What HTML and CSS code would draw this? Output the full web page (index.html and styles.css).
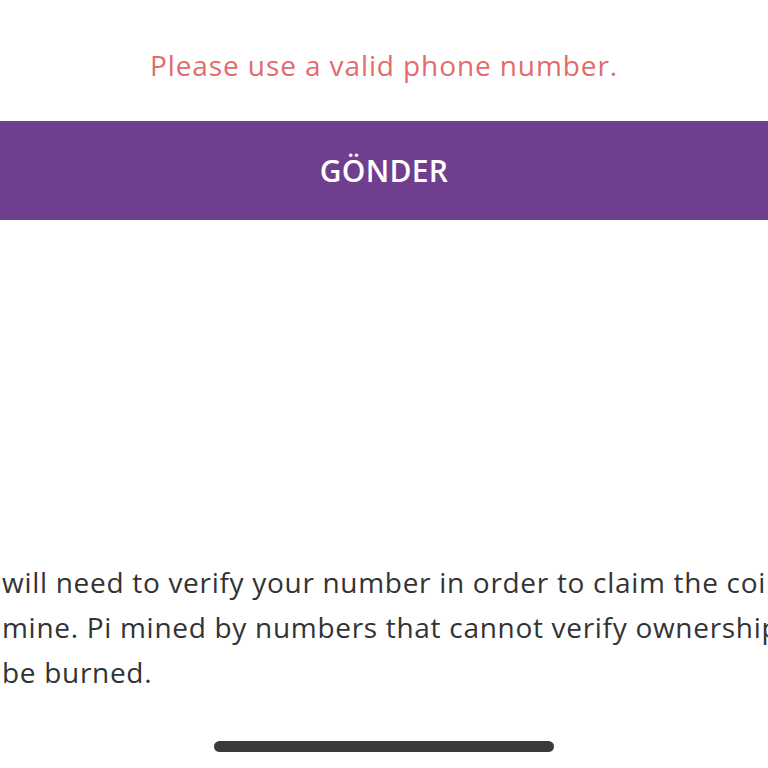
FILE: index.html
```html
<!DOCTYPE html>
<html>
<head>
<meta charset="utf-8">
<link rel="stylesheet" href="styles.css">
</head>
<body>
<div class="screen">
  <p class="error">Please use a valid phone number.</p>
  <button class="submit">GÖNDER</button>
  <div class="spacer"></div>
  <div class="note">
    <div class="line">will need to verify your number in order to claim the coins</div>
    <div class="line">mine. Pi mined by numbers that cannot verify ownership</div>
    <div class="line">be burned.</div>
  </div>
  <div class="home-wrap"><div class="home"></div></div>
</div>
</body>
</html>
```
FILE: styles.css
```css
html, body {
  margin: 0;
  padding: 0;
  background: #ffffff;
}
.screen {
  width: 768px;
  height: 768px;
  overflow: hidden;
  display: flex;
  flex-direction: column;
  font-family: "Open Sans", "Noto Sans", sans-serif;
}
.error {
  flex: none;
  margin: 0;
  padding-top: 45px;
  height: 121px;
  box-sizing: border-box;
  text-align: center;
  color: #e26b6b;
  font-size: 28px;
  line-height: 40px;
  letter-spacing: 0.9px;
}
.submit {
  flex: none;
  display: block;
  width: 100%;
  height: 99px;
  border: none;
  margin: 0;
  padding: 0;
  background: #6f3e8f;
  color: #ffffff;
  font-family: "Open Sans", "Noto Sans", sans-serif;
  font-weight: 600;
  font-size: 30px;
  letter-spacing: 0.3px;
}
.spacer {
  flex: none;
  height: 340px;
}
.note {
  flex: none;
  color: #333333;
  font-size: 28px;
  line-height: 45px;
  padding-left: 2px;
  letter-spacing: 0.7px;
}
.line {
  white-space: nowrap;
  overflow: hidden;
}
.home-wrap {
  flex: none;
  display: flex;
  justify-content: center;
  padding-top: 46px;
}
.home {
  width: 340px;
  height: 11px;
  border-radius: 6px;
  background: #3a3a3a;
}
```
